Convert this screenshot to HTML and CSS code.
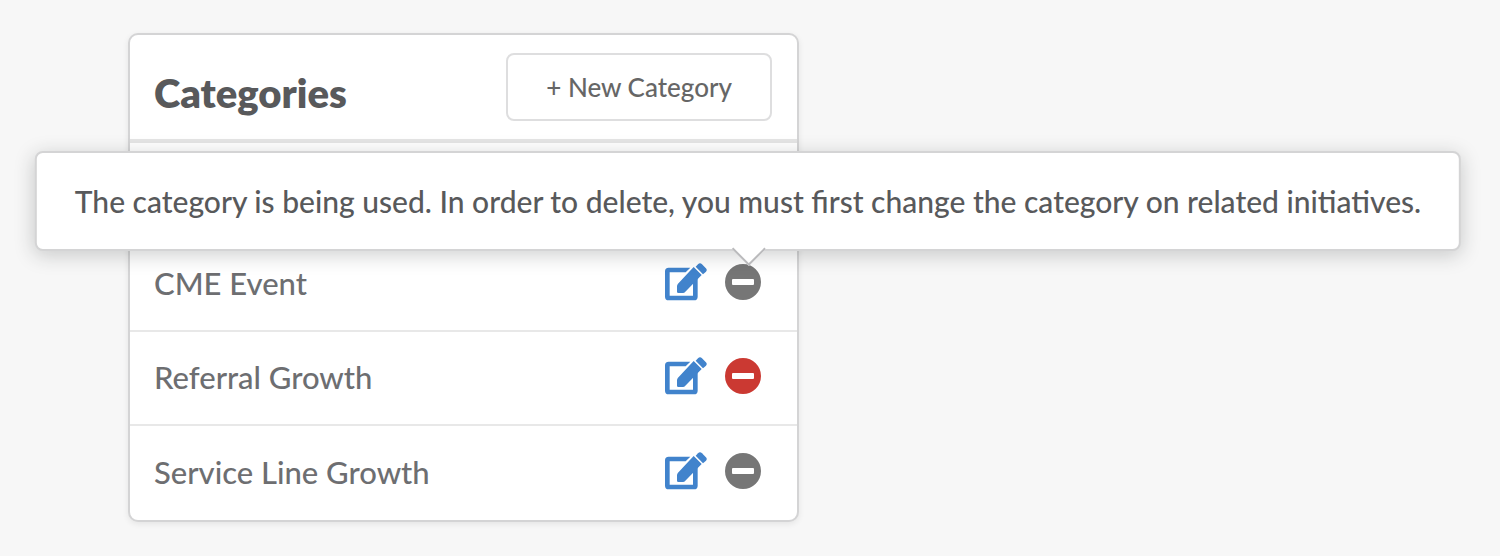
FILE: index.html
```html
<!DOCTYPE html>
<html lang="en">
<head>
  <meta charset="UTF-8">
  <meta name="viewport" content="width=device-width, initial-scale=1.0">
  <title>Categories</title>
  <link rel="stylesheet" href="styles.css">
</head>
<body>
  <svg class="sprite" aria-hidden="true">
    <symbol id="icon-edit" viewBox="0 0 126 114">
      <path d="M76 14H11a11 11 0 0 0-11 11v76a11 11 0 0 0 11 11h76a11 11 0 0 0 11-11V45L84 59v39H14V28h48z"/>
      <path d="M86 12L110 36L61 86Q58 90 54 90H40Q36 90 36 86V70Q36 65 39 62z"/>
      <path d="M92 11L99 4Q105-2 111 4L122 15Q128 21 123 26L114 34z"/>
    </symbol>
    <symbol id="icon-minus" viewBox="0 0 36 36">
      <path fill-rule="evenodd" d="M18 0a18 18 0 1 0 0 36a18 18 0 1 0 0-36zM8 15h20a1 1 0 0 1 1 1v4a1 1 0 0 1-1 1H8a1 1 0 0 1-1-1v-4a1 1 0 0 1 1-1z"/>
    </symbol>
  </svg>

  <section class="card">
    <header class="card-header">
      <h1>Categories</h1>
      <button type="button" class="new-button">+ New Category</button>
    </header>
    <ul class="category-list">
      <li class="category">
        <span class="name">CME Event</span>
        <button type="button" class="icon-button edit" aria-label="Edit CME Event"><svg><use href="#icon-edit"/></svg></button>
        <div class="delete-wrap">
          <button type="button" class="icon-button delete locked" aria-label="Delete CME Event" aria-describedby="in-use"><svg><use href="#icon-minus"/></svg></button>
          <div class="tooltip" id="in-use" role="tooltip">The category is being used. In order to delete, you must first change the category on related initiatives.</div>
        </div>
      </li>
      <li class="category">
        <span class="name">Referral Growth</span>
        <button type="button" class="icon-button edit" aria-label="Edit Referral Growth"><svg><use href="#icon-edit"/></svg></button>
        <div class="delete-wrap">
          <button type="button" class="icon-button delete" aria-label="Delete Referral Growth"><svg><use href="#icon-minus"/></svg></button>
        </div>
      </li>
      <li class="category">
        <span class="name">Service Line Growth</span>
        <button type="button" class="icon-button edit" aria-label="Edit Service Line Growth"><svg><use href="#icon-edit"/></svg></button>
        <div class="delete-wrap">
          <button type="button" class="icon-button delete locked" aria-label="Delete Service Line Growth"><svg><use href="#icon-minus"/></svg></button>
        </div>
      </li>
    </ul>
  </section>
</body>
</html>
```
FILE: styles.css
```css
* {
  box-sizing: border-box;
}

body {
  margin: 0;
  padding: 33px 128px;
  background-color: #f7f7f7;
  font-family: Lato, "Liberation Sans", sans-serif;
  font-size: 31px;
  font-weight: 500;
  color: #58595b;
}

.sprite {
  display: none;
}

.card {
  width: 100%;
  max-width: 671px;
  background: #fff;
  border: 2px solid #d4d4d5;
  border-radius: 10px;
  box-shadow: 0 2px 6px rgba(0, 0, 0, 0.08);
}

.card-header {
  display: flex;
  justify-content: space-between;
  align-items: center;
  padding: 18px 25px 18px 24px;
  border-bottom: 4px solid #e5e5e5;
}

h1 {
  margin: 12px 0 0;
  font-size: 40px;
  line-height: 48px;
  font-weight: 800;
}

.new-button {
  height: 68px;
  padding: 0 38px;
  background: #fff;
  border: 2px solid #dededf;
  border-radius: 8px;
  font-family: inherit;
  font-size: 26px;
  font-weight: 500;
  color: #666;
  cursor: pointer;
}

.category-list {
  list-style: none;
  margin: 0;
  padding: 95px 0 0;
}

.category {
  display: flex;
  align-items: center;
  height: 94px;
  padding: 0 26px 4px 24px;
  border-bottom: 2px solid #e8e8e8;
}

.category:last-child {
  border-bottom: none;
}

.name {
  flex: 1;
  padding-top: 2px;
  color: #6d6e71;
}

.icon-button {
  display: block;
  padding: 0;
  background: none;
  border: none;
  cursor: pointer;
}

.icon-button svg {
  display: block;
  width: 100%;
  height: 100%;
  fill: currentColor;
}

.edit {
  width: 42px;
  height: 38px;
  margin-right: 18px;
  color: #4183cc;
}

.delete-wrap {
  position: relative;
  width: 46px;
}

.delete {
  width: 36px;
  height: 36px;
  color: #cb3932;
}

.locked {
  color: #767676;
}

.tooltip {
  position: absolute;
  bottom: 49px;
  left: 50%;
  transform: translateX(-50%);
  padding: 28px 38px;
  background: #fff;
  border: 2px solid #d4d4d5;
  border-radius: 8px;
  box-shadow: 0 4px 20px rgba(34, 36, 38, 0.22);
  font-size: 30px;
  line-height: 40px;
  white-space: nowrap;
}

.tooltip::after {
  content: "";
  position: absolute;
  bottom: -12px;
  left: 50%;
  width: 22px;
  height: 22px;
  margin-left: -11px;
  background: #fff;
  border: solid #bababc;
  border-width: 0 2px 2px 0;
  transform: rotate(45deg);
}
```
